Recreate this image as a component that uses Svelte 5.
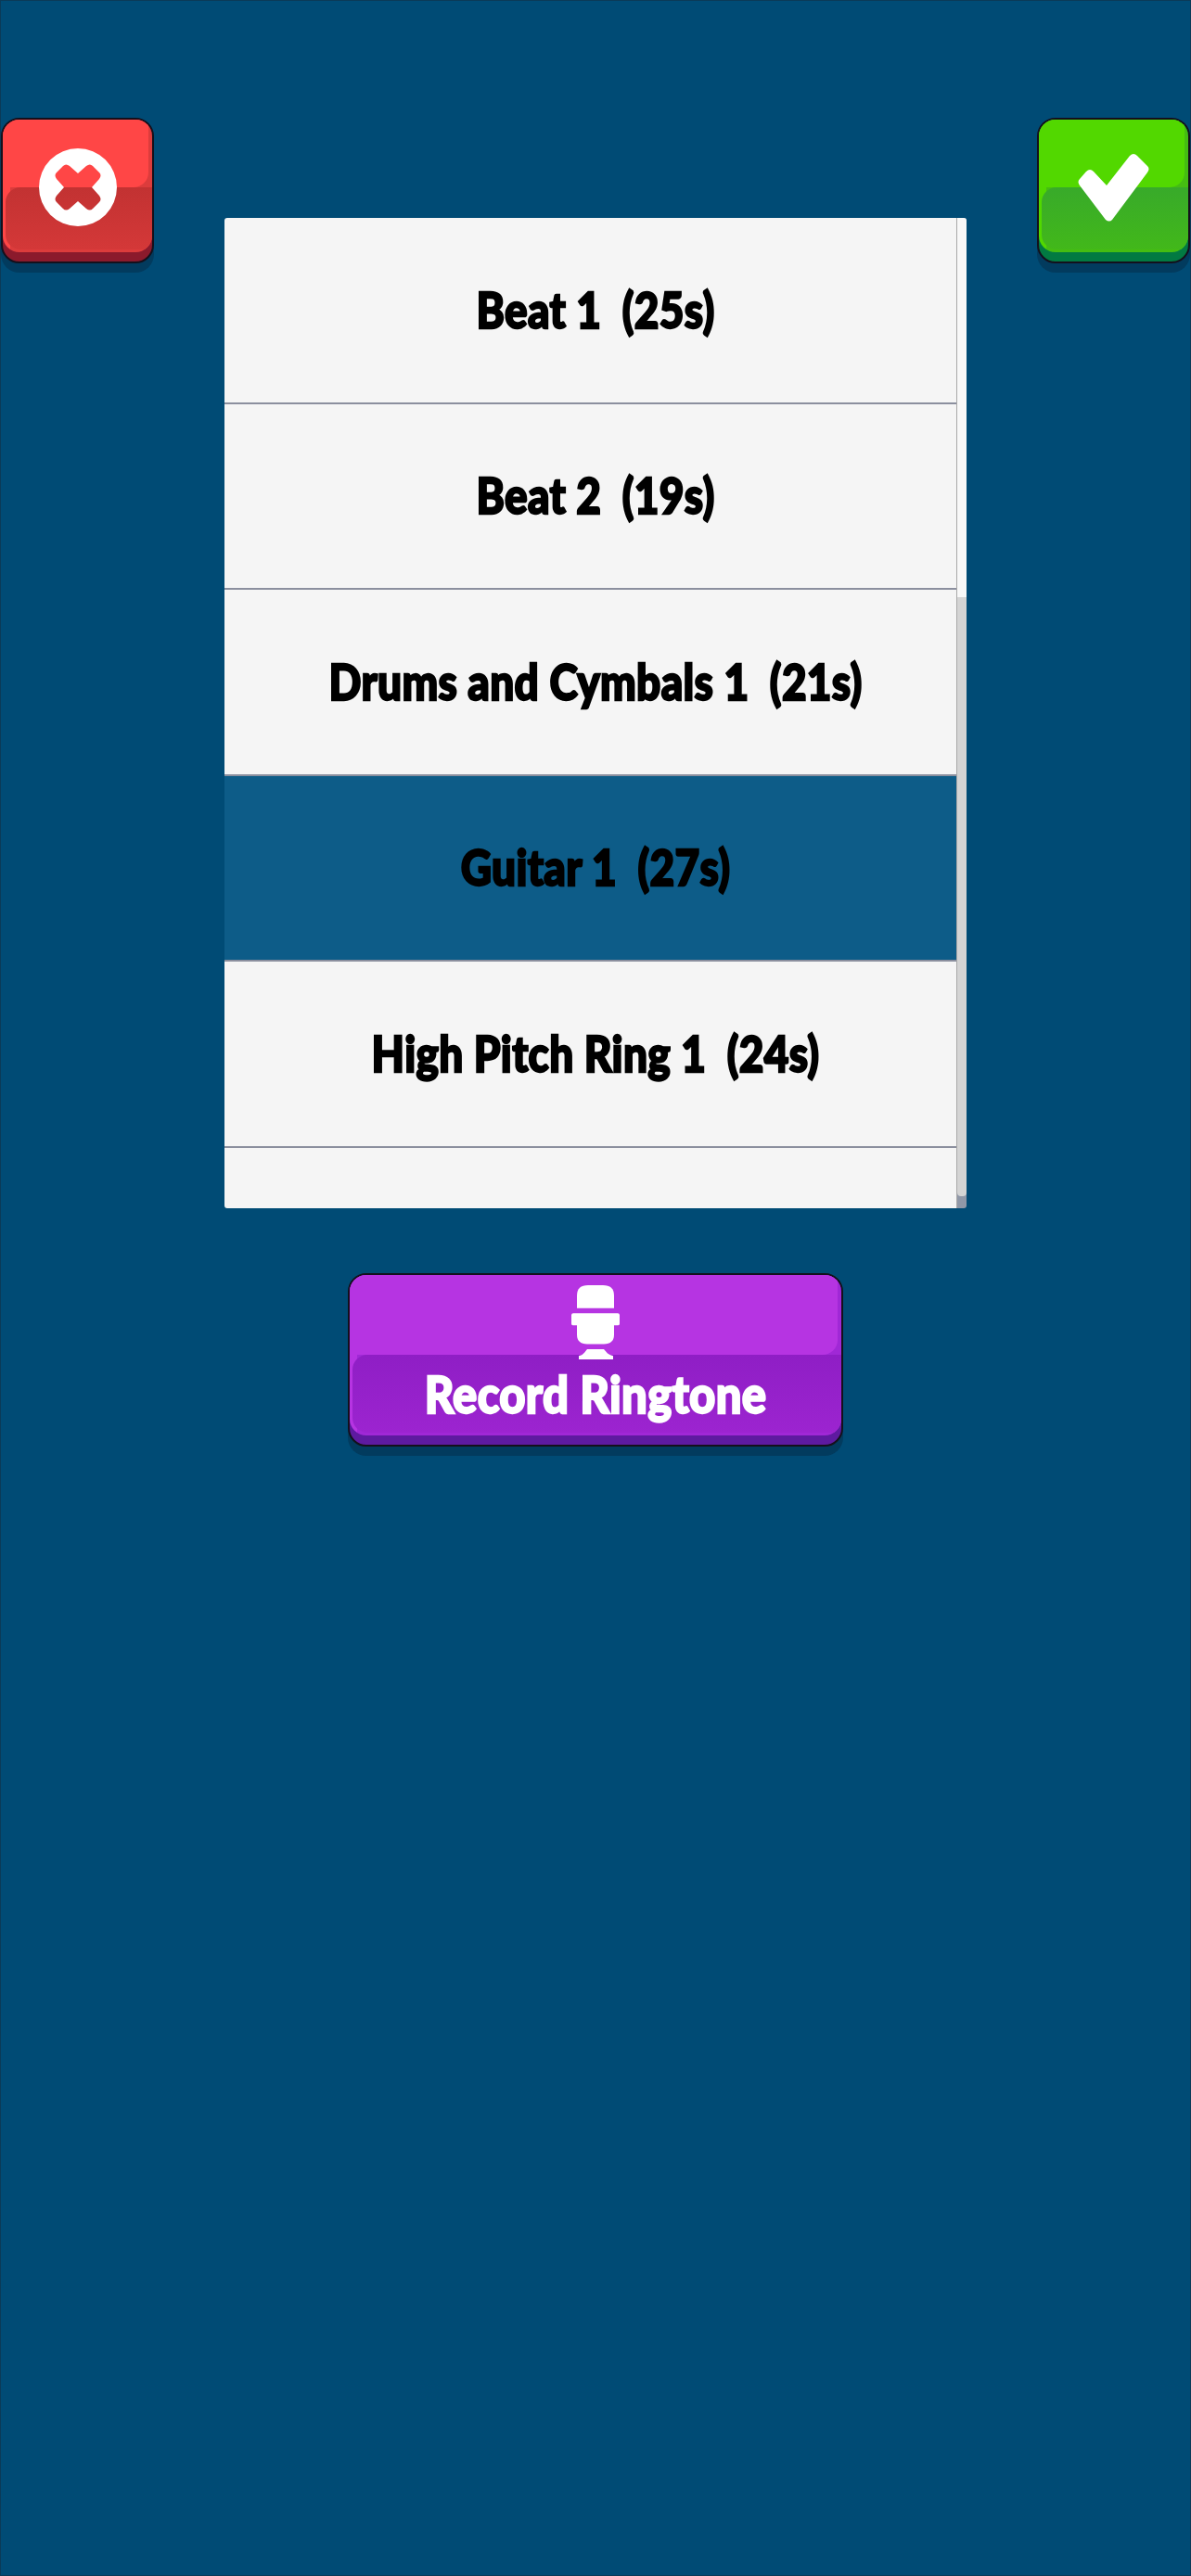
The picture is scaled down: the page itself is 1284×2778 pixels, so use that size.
<script>
    const songs = [
        { title: "Beat 1  (25s)" },
        { title: "Beat 2  (19s)" },
        { title: "Drums and Cymbals 1  (21s)" },
        { title: "Guitar 1  (27s)", selected: true },
        { title: "High Pitch Ring 1  (24s)" },
        { title: "" },
    ];
</script>

<div class="page">
    <div class="top">
        <button class="btn red small">
            <span class="face">
                <svg class="icon" width="84" height="84" viewBox="-42 -42 84 84">
                    <path
                        fill="#fff"
                        fill-rule="evenodd"
                        d="M0-42A42 42 0 1 1 0 42A42 42 0 1 1 0-42Z
                           M0-15L-9-23Q-13-26-16-23L-23-16Q-26-13-23-9L-15 0L-23 9Q-26 13-23 16L-16 23Q-13 26-9 23L0 15L9 23Q13 26 16 23L23 16Q26 13 23 9L15 0L23-9Q26-13 23-16L16-23Q13-26 9-23Z"
                    />
                </svg>
            </span>
        </button>

        <div class="list">
            <div class="rows">
                {#each songs as song}
                    <div class="row" class:selected={song.selected}>
                        <span class="title">{song.title}</span>
                    </div>
                {/each}
            </div>
            <div class="scrollbar">
                <div class="thumb"></div>
                <div class="track"></div>
                <div class="end"></div>
            </div>
        </div>

        <button class="btn green small">
            <span class="face">
                <svg class="icon" width="78" height="75" viewBox="78 57 78 75">
                    <path
                        fill="#fff"
                        d="M109 92L134 60Q138 56 142 60L153 71Q156 74 153 78L115 129Q112 132 108 129L80 92Q77 88 80 85L87 77Q91 73 95 77Z"
                    />
                </svg>
            </span>
        </button>
    </div>

    <div class="record">
        <button class="btn purple wide">
            <span class="face">
                <svg class="icon" width="52" height="80" viewBox="0 0 52 87" preserveAspectRatio="none">
                    <path fill="#fff" d="M6 12Q6 0 18 0H34Q46 0 46 12V27H6Z" />
                    <path fill="#fff" d="M0 35Q0 33 2 33H50Q52 33 52 35V45Q52 47 50 47H46V58Q46 69 35 69H17Q6 69 6 58V47H2Q0 47 0 45Z" />
                    <path fill="#fff" d="M17 75H35L39 80Q41 82 45 83V87H8V83Q12 82 14 79Z" />
                </svg>
                <span class="label">Record Ringtone</span>
            </span>
        </button>
    </div>
</div>

<style>
    :global(body) {
        margin: 0;
        background: #004b75;
    }
    .page {
        box-sizing: border-box;
        height: 2778px;
        border: 1px solid #0a3a58;
        background: #004b75;
        font-family: "Lato", "Liberation Sans", sans-serif;
        font-weight: 900;
    }
    .top {
        display: grid;
        grid-template-columns: 1fr 800px 1fr;
        align-items: start;
        padding-top: 126px;
    }
    .btn {
        display: block;
        box-sizing: border-box;
        padding: 0 0 10px;
        border: 2px solid #14101c;
        border-radius: 20px;
        box-shadow: 0 10px 0 #023b5e;
        font: inherit;
    }
    .face {
        position: relative;
        display: flex;
        flex-direction: column;
        align-items: center;
        justify-content: center;
        height: 100%;
        border-radius: 18px;
        overflow: hidden;
    }
    /* light top half */
    .face::before {
        content: "";
        position: absolute;
        left: 0;
        right: 4px;
        top: 0;
        border-radius: 0 0 16px 0;
    }
    /* darker lower panel */
    .face::after {
        content: "";
        position: absolute;
        left: 3px;
        right: 0;
        bottom: 3px;
        border-radius: 16px 0 0 16px;
    }
    .icon,
    .label {
        position: relative;
        z-index: 1;
    }

    .small {
        width: 165px;
        height: 157px;
    }
    .small .face {
        box-sizing: border-box;
        padding-top: 3px;
    }
    .small .face::before {
        height: 73px;
    }
    .small .face::after {
        top: 73px;
    }
    .red {
        background: #8b1a2c;
    }
    .red .face {
        background: linear-gradient(to right, #ff4646 8px, #dc3c3c 8px);
    }
    .red .face::before {
        background: #ff4646;
    }
    .red .face::after {
        background: linear-gradient(#c23232, #d43838);
    }
    .green {
        background: #027a42;
        justify-self: end;
    }
    .green .face {
        background: linear-gradient(to right, #52d800 8px, #45bd12 8px);
    }
    .green .face::before {
        background: #52d800;
    }
    .green .face::after {
        background: linear-gradient(#38aa2a, #42b81a);
    }

    .list {
        display: flex;
        height: 1068px;
        margin-top: 108px;
        overflow: hidden;
        border-radius: 3px;
    }
    .rows {
        flex: 1;
    }
    .row {
        box-sizing: border-box;
        display: flex;
        align-items: center;
        justify-content: center;
        height: 200.5px;
        padding-left: 11px;
        background: #f5f5f5;
        border-bottom: 2px solid #8b8f9e;
        color: #000;
        font-size: 46px;
        white-space: pre;
    }
    .row.selected {
        background: #0d5c88;
    }
    .title,
    .label {
        display: inline-block;
        transform: scaleY(1.14);
        letter-spacing: 0.3px;
        -webkit-text-stroke: 2px currentColor;
    }
    .scrollbar {
        display: flex;
        flex-direction: column;
        width: 11px;
        box-sizing: border-box;
        border-left: 1px solid #a8a8a8;
        background: #9098a8;
    }
    .thumb {
        height: 409px;
        background: #f8f8f8;
    }
    .track {
        flex: 1;
        background: #d4d4d4;
        border-radius: 0 0 4px 4px;
    }
    .end {
        height: 13px;
    }

    .record {
        display: flex;
        justify-content: center;
        margin-top: 70px;
    }
    .wide {
        width: 534px;
        height: 187px;
    }
    .wide .face {
        justify-content: flex-start;
        padding-top: 11px;
        gap: 11px;
        box-sizing: border-box;
    }
    .wide .face::before {
        height: 86px;
    }
    .wide .face::after {
        top: 86px;
    }
    .purple {
        background: #5e1aa0;
    }
    .purple .face {
        background: linear-gradient(to right, #b634e2 8px, #a028d6 8px);
    }
    .purple .face::before {
        background: #b634e2;
    }
    .purple .face::after {
        background: linear-gradient(#8f1ec5, #9c24d0);
    }
    .label {
        color: #fff;
        font-size: 49px;
        line-height: 50px;
        white-space: pre;
    }
</style>
